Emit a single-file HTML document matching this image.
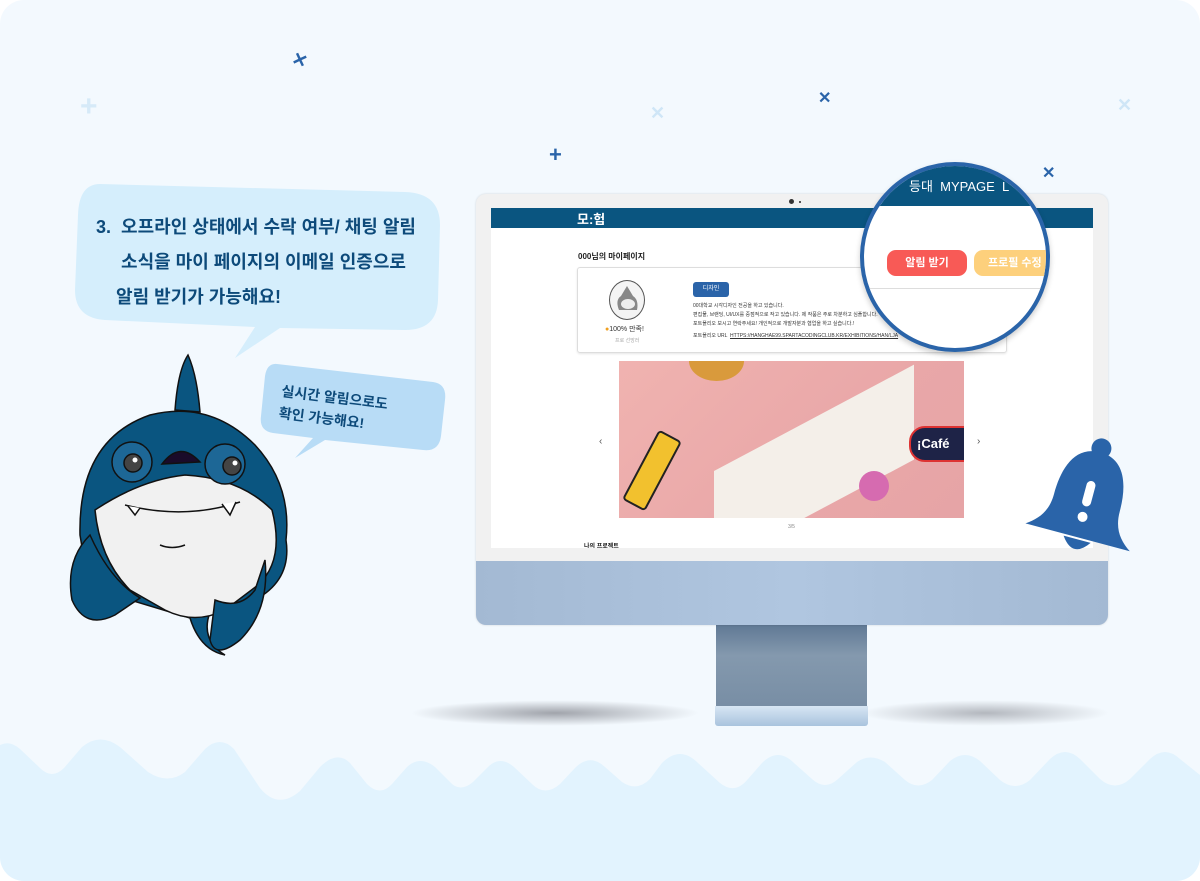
<!DOCTYPE html>
<html><head><meta charset="utf-8"><style>
body{margin:0;width:1200px;height:881px;overflow:hidden;background:#fff;font-family:"Liberation Sans","Noto Sans CJK KR",sans-serif}
.wrap{position:absolute;left:0;top:0;width:1200px;height:881px;background:#f3f9fe;border-radius:24px;overflow:hidden}
.abs{position:absolute}
</style></head><body><div class="wrap">
<!-- waves -->
<svg class="abs" style="left:0;top:735px" width="1200" height="146" viewBox="0 0 1200 146">
<path fill="#e2f3fe" d="M0 10 Q10 5 20 14 L40 33 Q52 45 64 33 L82 12 Q100 -3 120 12 L148 37 Q168 50 185 37 L205 14 Q220 0 234 14 L260 53 Q278 75 300 56 L320 32 Q337 15 350 28 L367 49 Q380 62 392 49 L407 32 Q420 20 435 32 L450 47 Q460 58 473 47 L488 32 Q500 20 514 32 L532 49 Q545 62 560 49 L575 33 Q590 18 605 32 L622 47 Q637 57 650 44 L662 28 Q680 10 698 28 L720 48 Q735 60 748 44 L762 28 Q778 12 794 28 L812 44 Q825 56 838 44 L857 27 Q870 18 885 27 L905 45 Q918 56 932 45 L950 26 Q965 14 980 26 L1000 45 Q1015 57 1030 45 L1050 24 Q1065 10 1080 24 L1100 44 Q1115 57 1130 44 L1150 24 Q1165 10 1180 24 L1200 40 L1200 146 L0 146Z"/>
</svg>
<!-- sparkles -->
<div class="abs" style="left:292px;top:50px;color:#2a64a9;font-size:18px;font-weight:bold;transform:rotate(20deg)">✕</div>
<div class="abs" style="left:818px;top:88px;color:#2a64a9;font-size:16px;font-weight:bold">✕</div>
<div class="abs" style="left:1042px;top:163px;color:#2a64a9;font-size:16px;font-weight:bold">✕</div>
<div class="abs" style="left:650px;top:103px;color:#cfe6f7;font-size:18px;font-weight:bold">✕</div>
<div class="abs" style="left:1117px;top:95px;color:#cfe6f7;font-size:18px;font-weight:bold">✕</div>
<div class="abs" style="left:80px;top:92px;color:#d6eaf8;font-size:30px;font-weight:bold;line-height:30px">+</div>
<div class="abs" style="left:549px;top:144px;color:#2a64a9;font-size:22px;font-weight:bold;line-height:22px">+</div>

<!-- monitor -->
<div class="abs" style="left:410px;top:700px;width:290px;height:26px;border-radius:50%;background:radial-gradient(ellipse,rgba(60,60,70,.45),rgba(60,60,70,0) 70%)"></div>
<div class="abs" style="left:860px;top:700px;width:250px;height:26px;border-radius:50%;background:radial-gradient(ellipse,rgba(60,60,70,.35),rgba(60,60,70,0) 70%)"></div>
<div class="abs" style="left:716px;top:624px;width:151px;height:90px;background:linear-gradient(#5f7894,#8499ae 35%,#768ca3)"></div>
<div class="abs" style="left:715px;top:706px;width:153px;height:20px;background:linear-gradient(#d7e6f4,#a9c3dd);border-radius:0 0 3px 3px"></div>
<div class="abs" style="left:476px;top:194px;width:632px;height:431px;border-radius:10px;background:#f1f1f1;box-shadow:0 0 2px rgba(0,0,0,.15);overflow:hidden">
 <div class="abs" style="left:0;top:367px;width:632px;height:64px;background:linear-gradient(90deg,#a3b9d3,#b0c6e0 50%,#a3b9d3)"></div>
 <div class="abs" style="left:313px;top:5px;width:5px;height:5px;border-radius:50%;background:#333"></div>
 <div class="abs" style="left:323px;top:7px;width:2px;height:2px;background:#555"></div>
</div>
<div class="abs" style="left:491px;top:208px;width:602px;height:340px;background:#fff;overflow:hidden">
 <div class="abs" style="left:0;top:0;width:602px;height:20px;background:#0a5580"></div>
 <div class="abs" style="left:86px;top:1px;color:#fff;font-size:13px;font-weight:bold">모:험</div>
 <div class="abs" style="left:87px;top:43px;font-size:8px;font-weight:bold;color:#222">000님의 마이페이지</div>
 <div class="abs" style="left:86px;top:59px;width:428px;height:84px;border:1px solid #ddd;border-radius:3px;box-shadow:0 1px 2px rgba(0,0,0,.1)"></div>
 <div class="abs" style="left:118px;top:72px;width:34px;height:38px;border:1px solid #555;border-radius:50%;background:#f4f4f4"></div>
 <svg class="abs" style="left:122px;top:76px" width="28" height="30"><path d="M14 2 L20 12 Q26 16 24 26 L6 26 Q2 16 8 12Z" fill="#888"/><ellipse cx="15" cy="20" rx="7" ry="5" fill="#eee"/></svg>
 <div class="abs" style="left:114px;top:116px;font-size:7px;color:#333"><span style="color:#f0a020">●</span>100% 만족!</div>
 <div class="abs" style="left:124px;top:129px;font-size:5px;color:#aaa">프로 선망러</div>
 <div class="abs" style="left:202px;top:74px;width:36px;height:15px;background:#2b64a9;border-radius:3px;color:#fff;font-size:6px;text-align:center;line-height:15px">디자인</div>
 <div class="abs" style="left:202px;top:94px;font-size:5px;line-height:9px;color:#333;width:200px">00대학교 시각디자인 전공을 하고 있습니다.<br>편집물, 브랜딩, UI/UX를 중점적으로 작고 있습니다. 제 작품은 주로 차분하고 심플합니다.<br>포트폴리오 보시고 연락주세요! 개인적으로 개발자분과 협업을 하고 싶습니다.!</div>
 <div class="abs" style="left:202px;top:124px;font-size:5px;color:#333">포트폴리오 URL &nbsp;<u>HTTPS://HANGHAE99.SPARTACODINGCLUB.KR/EXHIBITIONS/HAN/LJA</u></div>
 <div class="abs" style="left:128px;top:153px;width:345px;height:157px;background:linear-gradient(135deg,#f0b3b0,#e9a7a8 60%,#e6a4a6);overflow:hidden">
  <div class="abs" style="left:70px;top:-20px;width:55px;height:40px;border-radius:50%;background:#d99a3c"></div>
  <div class="abs" style="left:95px;top:110px;width:200px;height:95px;background:#f4efe9;transform:skewY(-28deg);transform-origin:0 0"></div>
  <div class="abs" style="left:20px;top:70px;width:22px;height:75px;background:#f2c12e;border:2px solid #222;border-radius:4px;transform:rotate(28deg)"></div>
  <div class="abs" style="left:290px;top:65px;width:60px;height:32px;background:#1e2347;border-radius:16px;border:2px solid #d33;color:#fff;font-weight:bold;font-size:13px;line-height:32px;padding-left:6px">¡Café</div>
  <div class="abs" style="left:240px;top:110px;width:30px;height:30px;background:#d66bb0;border-radius:50%"></div>
 </div>
 <div class="abs" style="left:108px;top:228px;font-size:10px;color:#555">‹</div>
 <div class="abs" style="left:486px;top:228px;font-size:10px;color:#555">›</div>
 <div class="abs" style="left:297px;top:316px;font-size:5px;color:#888">3/5</div>
 <div class="abs" style="left:93px;top:333px;font-size:6px;font-weight:bold;color:#222">나의 프로젝트</div>
</div>
<!-- magnifier -->
<div class="abs" style="left:860px;top:162px;width:190px;height:190px;border-radius:50%;border:4px solid #2a64a9;background:#fff;overflow:hidden;box-sizing:border-box;box-shadow:0 3px 6px rgba(0,0,0,.2)">
 <div class="abs" style="left:0;top:0;width:190px;height:40px;background:#0a5580"></div>
 <div class="abs" style="left:45px;top:10px;color:#fff;font-size:13px">등대 &nbsp;MYPAGE &nbsp;L</div>
 <div class="abs" style="left:23px;top:84px;width:80px;height:26px;background:#f85a56;border-radius:9px;color:#fff;font-size:11px;text-align:center;line-height:26px;font-weight:bold">알림 받기</div>
 <div class="abs" style="left:110px;top:84px;width:80px;height:26px;background:#fdd07c;border-radius:9px;color:#fff;font-size:11px;line-height:26px;padding-left:14px;font-weight:bold">프로필 수정</div>
 <div class="abs" style="left:0;top:122px;width:190px;height:1px;background:#ddd"></div>
</div>
<!-- bell -->
<svg class="abs" style="left:1025px;top:432px" width="120" height="145" viewBox="0 0 120 145">
<g transform="rotate(15 60 70)"><circle cx="62" cy="14" r="10" fill="#2a64a9"/><path d="M62 18 C35 18 28 45 28 70 C28 88 20 98 8 106 L116 106 C104 98 96 88 96 70 C96 45 89 18 62 18Z" fill="#2a64a9"/><path d="M48 108 Q62 128 76 108Z" fill="#2a64a9"/><rect x="57" y="48" width="9" height="26" rx="4.5" fill="#fff"/><circle cx="61.5" cy="85" r="5" fill="#fff"/></g>
</svg>
<!-- bubble 1 -->
<svg class="abs" style="left:70px;top:180px" width="380" height="180">
<path d="M30 4 L335 12 Q370 13 370 45 L368 120 Q367 150 335 150 L210 148 L165 178 L185 147 L35 140 Q5 138 5 110 L8 35 Q9 4 30 4Z" fill="#d5eefc"/>
</svg>
<div class="abs" style="left:96px;top:210px;font-size:18px;font-weight:bold;color:#0d4a7a;line-height:35px">3.&nbsp; 오프라인 상태에서 수락 여부/ 채팅 알림<br>&nbsp;&nbsp;&nbsp;&nbsp;&nbsp;소식을 마이 페이지의 이메일 인증으로<br>&nbsp;&nbsp;&nbsp;&nbsp;알림 받기가 가능해요!</div>
<!-- bubble 2 -->
<svg class="abs" style="left:255px;top:360px" width="200" height="105">
<path d="M22 4 L178 22 Q192 24 190 40 L186 76 Q184 92 168 90 L70 80 L40 98 L58 78 L18 73 Q4 71 6 56 L10 16 Q12 3 22 4Z" fill="#b8dcf6"/>
</svg>
<div class="abs" style="left:283px;top:380px;font-size:14px;font-weight:bold;color:#0d4a7a;line-height:22px;transform:rotate(7deg);transform-origin:0 0">실시간 알림으로도<br>확인 가능해요!</div>
<!-- shark -->
<svg class="abs" style="left:60px;top:350px" width="240" height="315" viewBox="60 350 240 315" stroke="#111" stroke-width="1.5">
<path d="M175 410 Q178 370 188 355 Q197 375 200 412Z" fill="#0a5580"/>
<path d="M80 535 Q78 440 150 415 Q210 400 255 445 Q292 485 286 540 Q292 580 255 600 L210 612 Q200 640 225 655 Q200 650 190 618 L130 600 Q100 580 85 565Z" fill="#0a5580"/>
<path d="M95 510 Q140 480 185 475 Q240 478 272 510 Q285 560 258 585 L225 610 Q195 625 165 610 L130 590 Q100 560 95 510Z" fill="#f1f1f1"/>
<path d="M125 505 Q185 520 240 502" fill="none"/>
<path d="M128 506 L135 515 L140 508" fill="#fff"/><path d="M222 504 L230 515 L236 502" fill="#fff"/>
<path d="M90 535 Q65 560 72 600 Q85 630 115 615 L140 598 Q110 580 90 535Z" fill="#0a5580"/>
<path d="M215 600 Q240 610 255 590 L265 560 Q270 610 240 640 Q215 660 210 640Z" fill="#0a5580"/>
<circle cx="132" cy="462" r="20" fill="#1d6796"/><circle cx="225" cy="464" r="20" fill="#1d6796"/>
<circle cx="133" cy="463" r="9" fill="#444"/><circle cx="232" cy="466" r="9" fill="#444"/>
<circle cx="135" cy="460" r="2.5" fill="#fff" stroke="none"/><circle cx="235" cy="463" r="2.5" fill="#fff" stroke="none"/>
<path d="M162 464 Q180 440 200 462Z" fill="#1a0b2a"/>
<path d="M160 545 Q172 550 185 545" fill="none"/>
</svg>
</div></body></html>
